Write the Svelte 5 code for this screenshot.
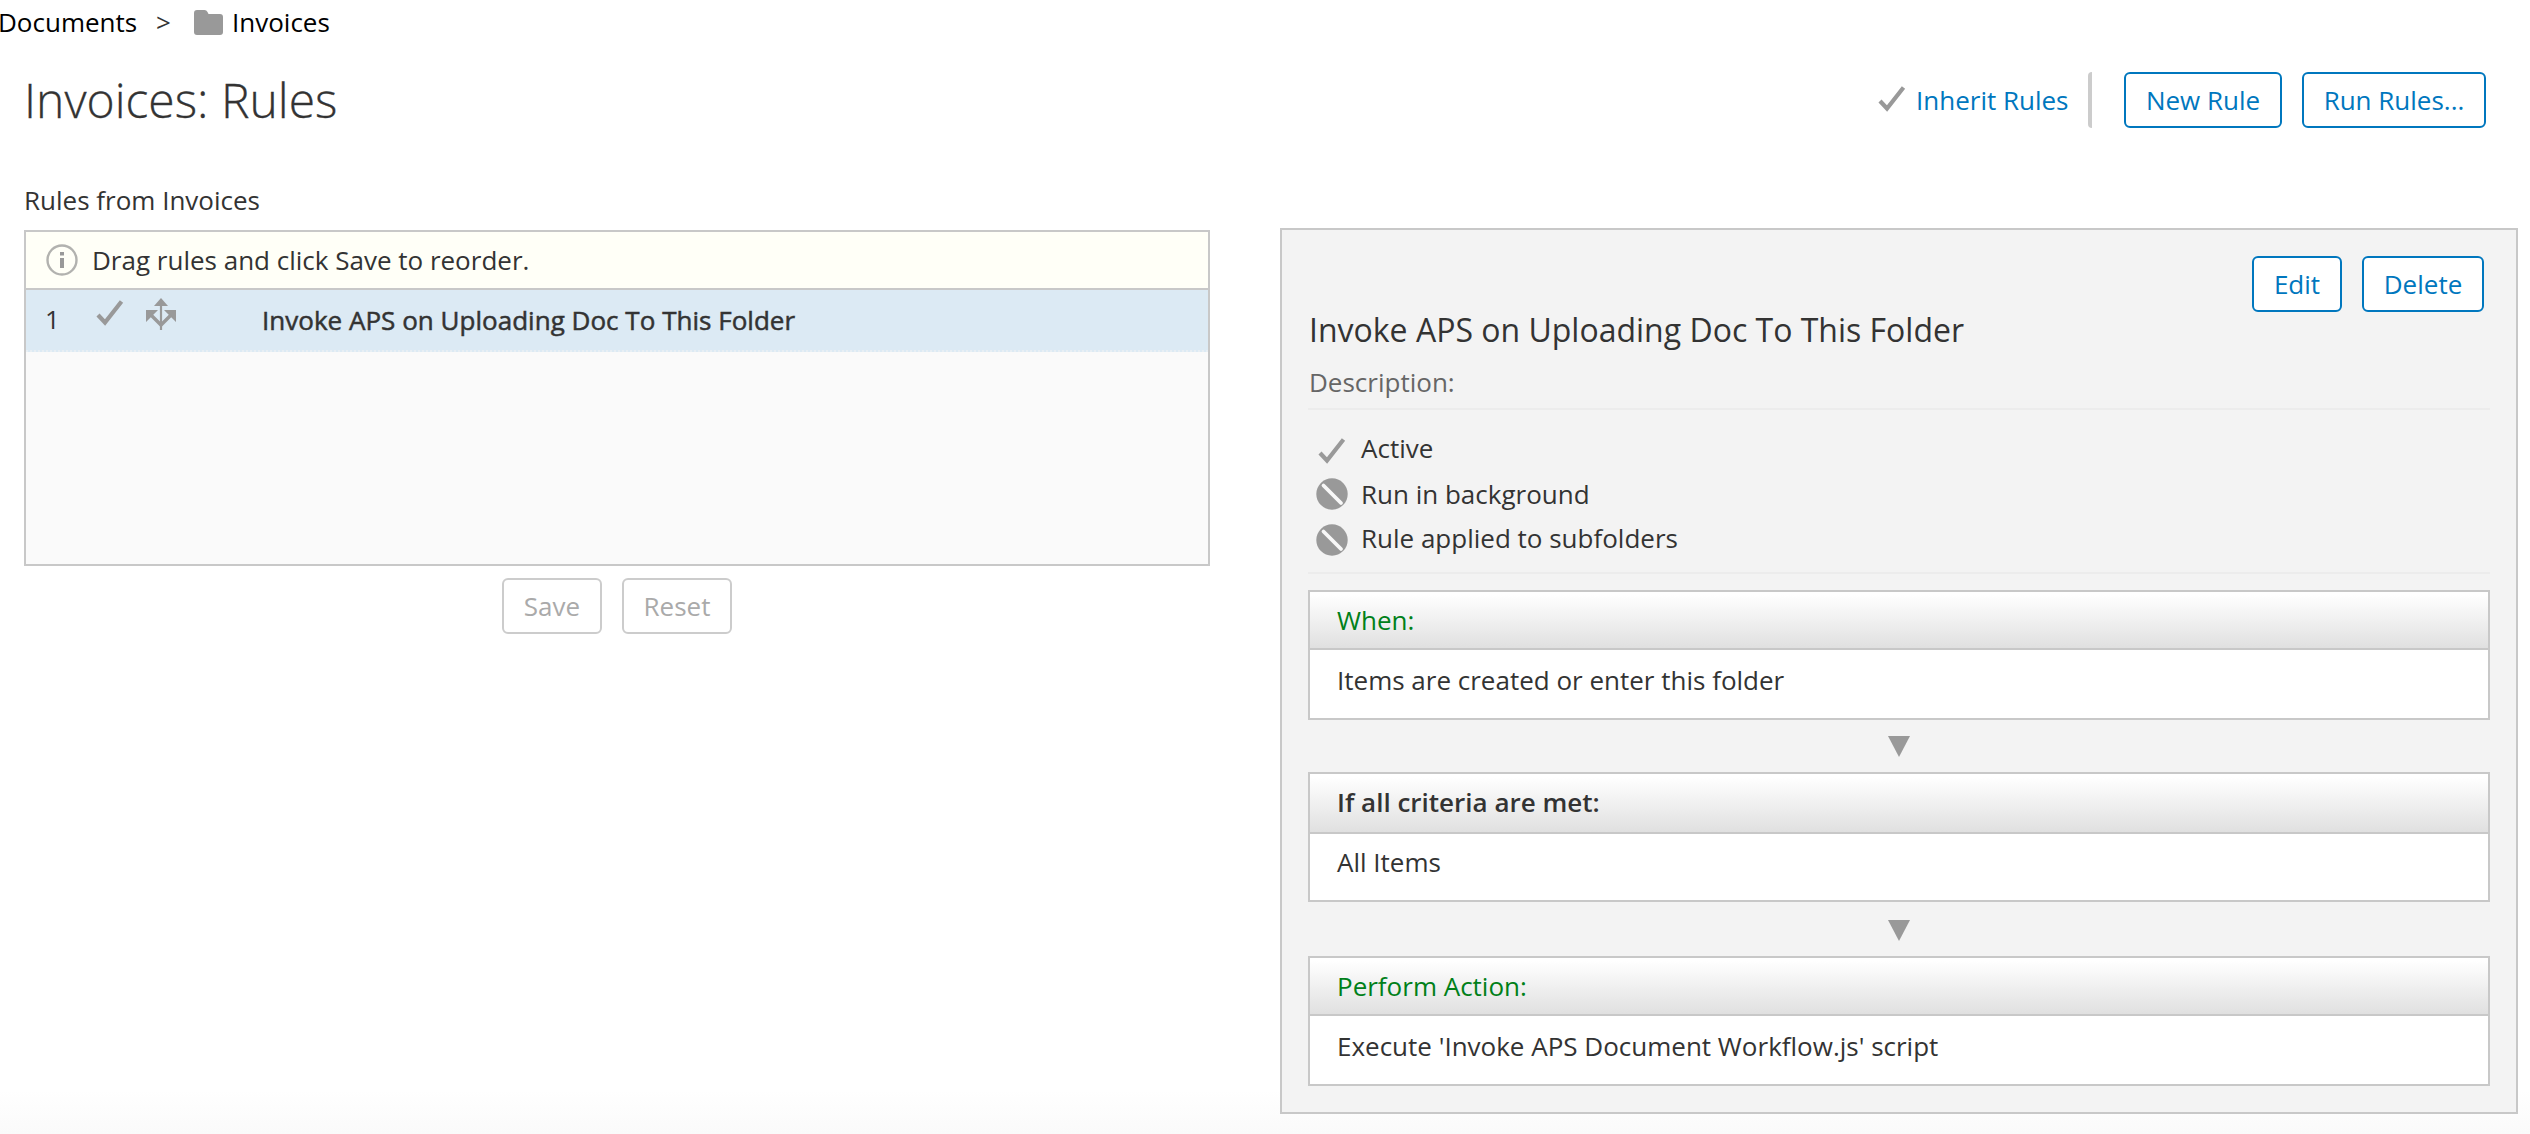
<script>
  const flags = [
    { icon: 'check', text: 'Active', cls: 'active' },
    { icon: 'no', text: 'Run in background', cls: 'background' },
    { icon: 'no', text: 'Rule applied to subfolders', cls: 'subfolders' }
  ];
  const sections = [
    { cls: 'when', title: 'When:', body: 'Items are created or enter this folder' },
    { cls: 'criteria', title: 'If all criteria are met:', body: 'All Items' },
    { cls: 'action', title: 'Perform Action:', body: "Execute 'Invoke APS Document Workflow.js' script" }
  ];
</script>

{#snippet check()}
  <svg class="icon" viewBox="0 0 32 32"><path d="M4 17 11 24.500 27.500 3.500" fill="none" stroke="#999" stroke-width="4.2" /></svg>
{/snippet}

{#snippet blocked()}
  <svg class="icon" viewBox="0 0 32 32"><circle cx="16" cy="16" r="15.7" fill="#999" /><path d="M7.500 7.500 25 25" stroke="#f8f8f8" stroke-width="3.800" stroke-linecap="round" /></svg>
{/snippet}

<div class="page">
  <nav class="crumbs">
    <span class="docs">Documents</span>
    <span class="sep">&gt;</span>
    <svg class="folder" viewBox="0 0 29 25"><path d="M3 0H10.5Q12.5 0 13.5 2L14.5 4H26Q29 4 29 7V22Q29 25 26 25H3Q0 25 0 22V3Q0 0 3 0Z" fill="#999" /></svg>
    <span class="here">Invoices</span>
  </nav>

  <header>
    <h1>Invoices: Rules</h1>
    <div class="tools">
      {@render check()}
      <span class="inherit">Inherit Rules</span>
      <span class="divider"></span>
      <button class="new">New Rule</button>
      <button class="run">Run Rules...</button>
    </div>
  </header>

  <main>
    <section class="left">
      <div class="label">Rules from Invoices</div>
      <div class="list">
        <div class="hint">
          <svg class="icon" viewBox="0 0 32 32"><circle cx="16" cy="16" r="14.5" fill="none" stroke="#b2b2af" stroke-width="2.4" /><path d="M16 8V11.500M16 14V24" stroke="#999" stroke-width="4" /></svg>
          <span>Drag rules and click Save to reorder.</span>
        </div>
        <div class="row">
          <span class="num">1</span>
          {@render check()}
          <svg class="icon move" viewBox="0 0 32 32"><path d="M15 0 22 8H8ZM0 12H12L0 24ZM30 12H18L30 24Z" fill="#999" /><path d="M15 6V32" stroke="#999" stroke-width="2.2" /><path d="M5 17 15 27 25 17" fill="none" stroke="#999" stroke-width="3.400" /></svg>
          <span class="name">Invoke APS on Uploading Doc To This Folder</span>
        </div>
      </div>
      <div class="actions">
        <button class="save" disabled>Save</button>
        <button class="reset" disabled>Reset</button>
      </div>
    </section>

    <section class="panel">
      <div class="panel-tools">
        <button class="edit">Edit</button>
        <button class="delete">Delete</button>
      </div>
      <h2>Invoke APS on Uploading Doc To This Folder</h2>
      <div class="desc">Description:</div>
      <div class="flags">
        {#each flags as flag}
          <div class="flag {flag.cls}">
            {#if flag.icon === 'check'}{@render check()}{:else}{@render blocked()}{/if}
            <span>{flag.text}</span>
          </div>
        {/each}
      </div>
      {#each sections as s, i}
        {#if i > 0}
          <div class="arrow {s.cls}"><svg viewBox="0 0 22 21"><path d="M0 0H22L11 21Z" fill="#999" /></svg></div>
        {/if}
        <div class="box {s.cls}">
          <div class="box-head">{s.title}</div>
          <div class="box-body">{s.body}</div>
        </div>
      {/each}
    </section>
  </main>
</div>

<style>
  :global(body) { margin: 0; background: #fff; }
  .page { width: 2530px; height: 1134px; overflow: hidden; box-sizing: border-box; background: linear-gradient(#fff 1090px, #fafafa 1134px); font: 26px/36px "Open Sans", sans-serif; color: #333; white-space: nowrap; }
  .page * { box-sizing: border-box; }
  .icon { width: 32px; height: 32px; flex: none; display: block; }

  .crumbs { height: 46px; display: flex; align-items: flex-start; padding-top: 4px; color: #000; }
  .docs { width: 158px; margin-left: -2px; }
  .sep { width: 38px; color: #333; }
  .folder { width: 29px; height: 25px; margin-top: 6px; }
  .here { margin-left: 9px; }

  header { height: 110px; padding: 0 44px 0 24px; display: flex; justify-content: space-between; align-items: flex-start; }
  h1 { margin: 20px 0 0; font-size: 48px; line-height: 68px; font-weight: 300; -webkit-text-stroke: 0.3px #333; }
  .tools { display: flex; margin-top: 26px; height: 56px; align-items: center; color: #0077be; }
  .tools .icon { margin-bottom: 1px; }
  .inherit { margin-left: 8px; width: 151px; }
  .divider { width: 4px; height: 56px; margin-left: 21px; background: #ccc; border-radius: 4px 0 0 4px; }

  button { height: 56px; padding: 0; border: 2px solid #0077be; border-radius: 6px; background: #fff; color: #0077be; font: 26px/36px "Open Sans", sans-serif; text-align: center; }
  button:disabled { border-color: #ccc; color: #aaa; }
  .new { width: 158px; margin-left: 32px; }
  .run { width: 184px; margin-left: 20px; }

  main { display: flex; justify-content: space-between; padding: 0 12px 0 24px; }
  .left { width: 1186px; padding-top: 26px; }
  .label { height: 48px; }
  .list { height: 336px; border: 2px solid #c8c8c8; background: #fafafa; }
  .hint { height: 58px; display: flex; align-items: center; padding-left: 20px; background: #fffff7; border-bottom: 2px solid #c8c8c8; }
  .hint span { margin-left: 14px; }
  .row { height: 62px; display: flex; background: #dceaf4; border-bottom: 2px dotted #e8eff4; padding: 11px 0 0 19px; }
  .num { width: 49px; }
  .row .icon { margin-top: -3px; }
  .row .move { margin-left: 20px; }
  .name { margin: 1px 0 0 84px; letter-spacing: 0.02px; -webkit-text-stroke: 0.5px #333; }
  .actions { display: flex; gap: 20px; margin-top: 12px; padding-left: 478px; }
  .save { width: 100px; }
  .reset { width: 110px; }

  .panel { width: 1238px; height: 886px; margin-top: 72px; padding: 26px 26px 0; border: 2px solid #c8c8c8; background: #f3f3f3; }
  .panel-tools { display: flex; justify-content: flex-end; gap: 20px; padding-right: 6px; height: 48px; }
  .edit { width: 90px; }
  .delete { width: 122px; }
  h2 { margin: 3px 0 0 1px; font-size: 32px; line-height: 46px; font-weight: 400; }
  .desc { height: 57px; padding: 11px 0 0 1px; color: #666; border-bottom: 2px solid #ececec; }
  .flags { height: 164px; padding: 20px 0 0 8px; border-bottom: 2px solid #ececec; }
  .flag { display: flex; height: 44px; align-items: flex-start; }
  .flag span { margin-left: 13px; }
  .flag .icon { margin-top: 4px; }
  .flag.active .icon { margin-top: 6px; }
  .flag.background { height: 46px; }
  .flag.background span { margin-top: 2px; }
  .box { height: 130px; border: 2px solid #c8c8c8; background: #fff; }
  .box.when { margin-top: 16px; }
  .box-head { height: 58px; padding: 10px 0 0 27px; border-bottom: 2px solid #c8c8c8; background: linear-gradient(#fff 5%, #e0e0e0); color: #008019; }
  .criteria .box-head { height: 60px; font-weight: 600; color: #333; }
  .box-body { padding: 12px 0 0 27px; }
  .criteria .box-body { padding-top: 10px; }
  .arrow { height: 52px; display: flex; justify-content: center; padding-top: 16px; }
  .arrow.action { height: 54px; padding-top: 18px; }
  .arrow svg { width: 22px; height: 21px; }
</style>
